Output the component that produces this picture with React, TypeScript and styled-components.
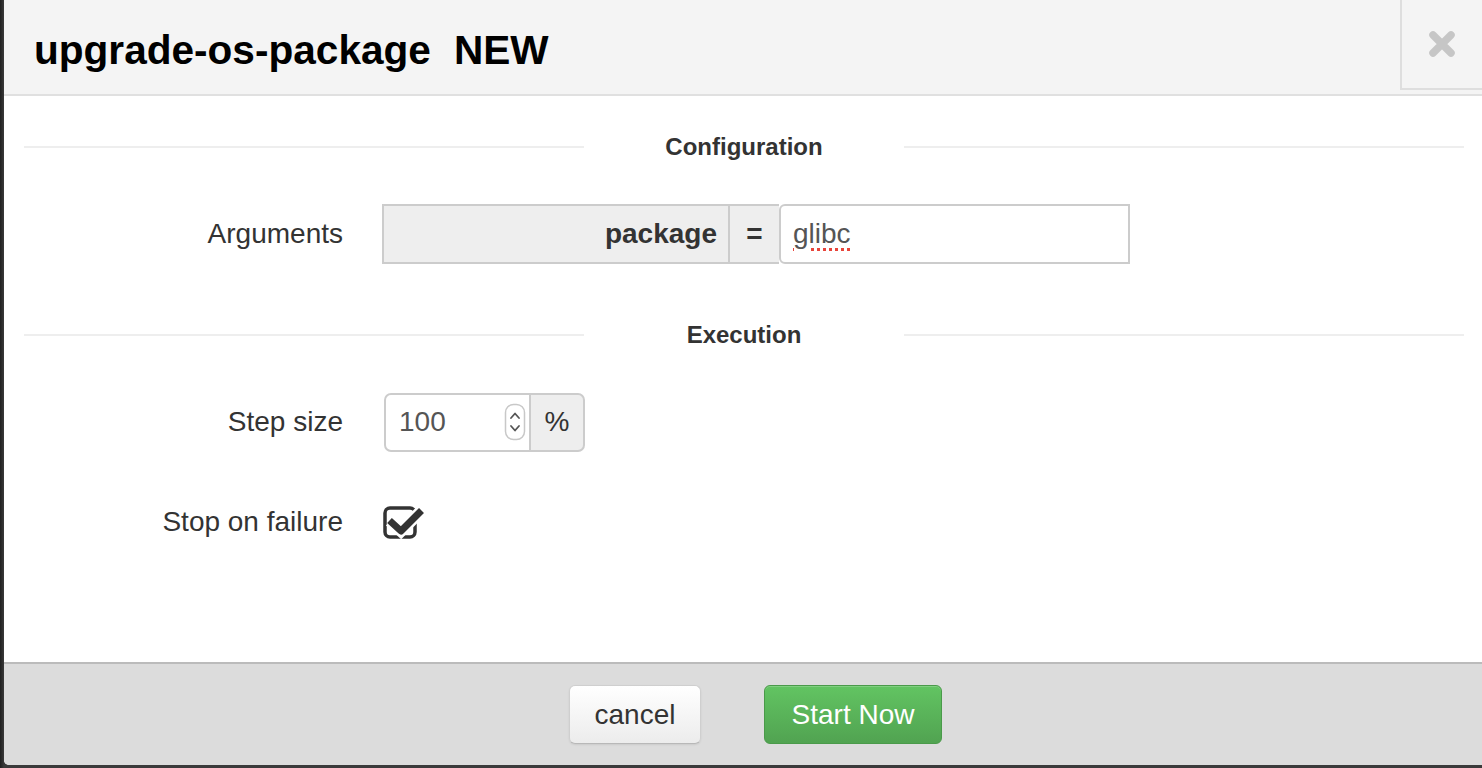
import React from "react";
import styled, { createGlobalStyle } from "styled-components";

const GlobalStyle = createGlobalStyle`
    html, body {
        margin: 0;
        padding: 0;
        background: #2b2b2b;
    }
    body {
        font-family: "Liberation Sans", Arial, Helvetica, sans-serif;
        color: #333;
    }
`;

const CloseIcon: React.FC = () => (
    <svg width="28" height="28" viewBox="0 0 28 28">
        <path
            d="M5 5 L23 23 M23 5 L5 23"
            stroke="#c6c6c6"
            strokeWidth="7.5"
            strokeLinecap="round"
        />
    </svg>
);

const SpinnerIcon: React.FC = () => (
    <svg width="22" height="38" viewBox="0 0 22 38">
        <rect
            x="1.5"
            y="1.5"
            width="19"
            height="35"
            rx="8"
            fill="#fff"
            stroke="#c8c8c8"
            strokeWidth="1.5"
        />
        <path
            d="M7 15 L11 10.5 L15 15 M7 23 L11 27.5 L15 23"
            stroke="#555"
            strokeWidth="1.8"
            fill="none"
            strokeLinecap="round"
            strokeLinejoin="round"
        />
    </svg>
);

const CheckIcon: React.FC = () => (
    <svg width="42" height="36" viewBox="0 0 42 36">
        <rect
            x="2"
            y="4"
            width="30"
            height="29"
            rx="5"
            fill="none"
            stroke="#333"
            strokeWidth="3.5"
        />
        <path
            d="M7 17 L18 27 L38 7"
            stroke="#fff"
            strokeWidth="12"
            fill="none"
        />
        <path
            d="M6.5 16.5 L18 27 L38.5 6.5"
            stroke="#333"
            strokeWidth="7"
            fill="none"
            strokeLinejoin="round"
        />
    </svg>
);

interface SectionProps {
    title: string;
    offset: number;
}

const SectionDivider: React.FC<SectionProps> = ({ title, offset }) => (
    <Divider offset={offset}>
        <Rule />
        <Legend>{title}</Legend>
        <Rule />
    </Divider>
);

const App: React.FC = () => {
    return (
        <Screen>
            <GlobalStyle />
            <Modal>
                <Header>
                    <Title>
                        upgrade-os-package<Badge>NEW</Badge>
                    </Title>
                    <CloseBox>
                        <CloseIcon />
                    </CloseBox>
                </Header>

                <Body>
                    <SectionDivider title="Configuration" offset={36} />
                    <FormRow offset={42}>
                        <Label>Arguments</Label>
                        <ArgGroup>
                            <KeyAddon>package</KeyAddon>
                            <EqAddon>=</EqAddon>
                            <ValueInput>
                                <Misspelled>glibc</Misspelled>
                            </ValueInput>
                        </ArgGroup>
                    </FormRow>

                    <SectionDivider title="Execution" offset={56} />
                    <FormRow offset={42}>
                        <Label>Step size</Label>
                        <StepGroup>
                            <NumberBox>
                                <span>100</span>
                                <SpinnerIcon />
                            </NumberBox>
                            <PercentAddon>%</PercentAddon>
                        </StepGroup>
                    </FormRow>
                    <FormRow offset={40}>
                        <Label>Stop on failure</Label>
                        <CheckWrap>
                            <CheckIcon />
                        </CheckWrap>
                    </FormRow>
                </Body>

                <Footer>
                    <CancelButton>cancel</CancelButton>
                    <StartButton>Start Now</StartButton>
                </Footer>
            </Modal>
        </Screen>
    );
};

const Screen = styled.div`
    display: flex;
    width: 1482px;
    height: 768px;
    box-sizing: border-box;
    padding: 0 0 3px 4px;
    overflow: hidden;
    background: linear-gradient(90deg, #1f1f1f 0, #3a3a3a 4px);
`;

const Modal = styled.div`
    display: flex;
    flex-direction: column;
    flex-shrink: 0;
    width: 1480px;
    background: #fff;
    border-bottom-left-radius: 5px;
    overflow: hidden;
`;

const Header = styled.div`
    display: flex;
    justify-content: space-between;
    align-items: flex-start;
    height: 96px;
    box-sizing: border-box;
    background: #f4f4f4;
    border-bottom: 2px solid #e0e0e0;
`;

const Title = styled.h1`
    margin: 26px 0 0 30px;
    font-size: 40.6px;
    line-height: 48px;
    font-weight: 700;
    color: #000;
`;

const Badge = styled.span`
    margin-left: 23px;
`;

const CloseBox = styled.div`
    display: flex;
    align-items: center;
    justify-content: center;
    width: 84px;
    height: 90px;
    box-sizing: border-box;
    padding: 0 4px 0 2px;
    border-left: 2px solid #dedede;
    border-bottom: 2px solid #dedede;
`;

const Body = styled.div`
    flex: 1;
    padding: 0 20px;
`;

const Divider = styled.div<{ offset: number }>`
    display: flex;
    align-items: center;
    height: 30px;
    margin-top: ${(props) => props.offset}px;
`;

const Rule = styled.div`
    flex: 1;
    height: 2px;
    background: #eeeeee;
`;

const Legend = styled.div`
    width: 320px;
    text-align: center;
    font-size: 24px;
    font-weight: 700;
    color: #333;
`;

const FormRow = styled.div<{ offset: number }>`
    display: flex;
    align-items: center;
    height: 60px;
    margin-top: ${(props) => props.offset}px;
`;

const Label = styled.div`
    width: 319px;
    margin-right: 39px;
    text-align: right;
    font-size: 28px;
    color: #333;
`;

const ArgGroup = styled.div`
    display: flex;
    width: 748px;
    height: 60px;
`;

const Addon = styled.div`
    display: flex;
    align-items: center;
    box-sizing: border-box;
    background: #eeeeee;
    border: 2px solid #cccccc;
    font-size: 28px;
    color: #333;
`;

const KeyAddon = styled(Addon)`
    width: 347px;
    justify-content: flex-end;
    padding-right: 11px;
    border-right-width: 1px;
    font-weight: 700;
`;

const EqAddon = styled(Addon)`
    width: 50px;
    justify-content: center;
    border-left-width: 1px;
    border-right: none;
    font-weight: 700;
`;

const ValueInput = styled.div`
    display: flex;
    align-items: center;
    flex: 1;
    box-sizing: border-box;
    padding-left: 12px;
    background: #fff;
    border: 2px solid #cccccc;
    border-radius: 6px 0 0 6px;
    font-size: 28px;
    color: #555;
`;

const Misspelled = styled.span`
    text-decoration: underline dotted #e8443a;
    text-decoration-thickness: 3px;
    text-underline-offset: 5px;
`;

const StepGroup = styled.div`
    display: flex;
    height: 59px;
    margin-left: 2px;
`;

const NumberBox = styled.div`
    display: flex;
    align-items: center;
    justify-content: space-between;
    width: 146px;
    box-sizing: border-box;
    padding: 0 3px 0 13px;
    background: #fff;
    border: 2px solid #cccccc;
    border-right-width: 1px;
    border-radius: 7px 0 0 7px;
    font-size: 28px;
    color: #555;
`;

const PercentAddon = styled(Addon)`
    width: 55px;
    justify-content: center;
    border-left-width: 1px;
    border-radius: 0 7px 7px 0;
    font-weight: 400;
`;

const CheckWrap = styled.div`
    display: flex;
    margin-left: 1px;
`;

const Footer = styled.div`
    display: flex;
    justify-content: center;
    align-items: center;
    gap: 63px;
    height: 103px;
    box-sizing: border-box;
    padding-left: 23px;
    background: #dcdcdc;
    border-top: 2px solid #bbbbbb;
`;

const Button = styled.button`
    height: 59px;
    padding: 0;
    font-family: inherit;
    font-size: 28px;
    border-radius: 6px;
    cursor: pointer;
`;

const CancelButton = styled(Button)`
    width: 132px;
    color: #333;
    background: linear-gradient(#ffffff, #ececec);
    border: 1px solid #cfcfcf;
    border-bottom-color: #b8b8b8;
    box-shadow: 0 1px 2px rgba(0, 0, 0, 0.08);
`;

const StartButton = styled(Button)`
    width: 178px;
    color: #fff;
    background: linear-gradient(#62c462, #51a351);
    border: 1px solid #4a9a4a;
    box-shadow: inset 0 1px 0 rgba(255, 255, 255, 0.2);
`;

export default App;
